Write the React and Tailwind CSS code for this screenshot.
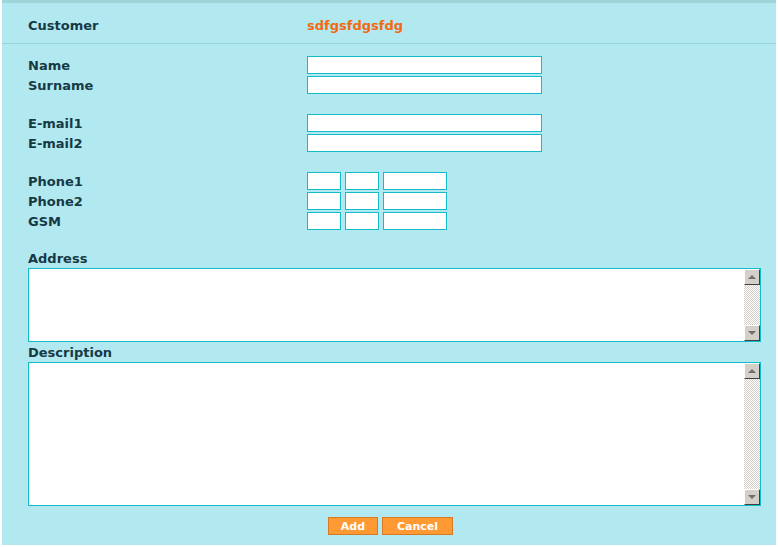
import React from "react";

const font = { fontFamily: '"DejaVu Sans", Verdana, sans-serif' };

const Field = ({ className = "" }) => (
  <input className={`h-[18px] border border-[#14bccb] bg-white outline-none ${className}`} />
);

const ScrollBtn = ({ down }) => (
  <div className="w-[16px] h-[16px] shrink-0 bg-[#d4d0c8] border-t border-l border-t-white border-l-white border-r border-b border-r-[#404040] border-b-[#404040] flex items-center justify-center">
    <svg width="8" height="5" viewBox="0 0 8 5">
      {down ? <path d="M0 0h8L4 4z" fill="#6f6f6f" /> : <path d="M4 0l4 4H0z" fill="#6f6f6f" />}
    </svg>
  </div>
);

const TextBox = ({ h }) => (
  <div className={`flex border border-[#14bccb] bg-white ${h}`}>
    <textarea className="flex-1 resize-none outline-none bg-white" />
    <div className="w-[16px] flex flex-col">
      <ScrollBtn />
      <div className="flex-1 bg-[repeating-conic-gradient(#d4d0c8_0_25%,#ffffff_0_50%)] bg-[length:2px_2px]" />
      <ScrollBtn down />
    </div>
  </div>
);

const Row = ({ label, children }) => (
  <div className="flex items-center h-[20px]">
    <span className="w-[279px] shrink-0 pt-[2px]">{label}</span>
    {children}
  </div>
);

export default function App() {
  return (
    <div className="w-[778px] h-[547px] bg-white px-[2px] pb-[2px]" style={font}>
      <div className="h-full bg-[#b2e9f0] border-t-[3px] border-[#9dd5d8] text-[13px] font-bold text-[#163a45]">
        <div className="flex items-center h-[41px] px-[26px] pt-[6px] border-b border-[#97d3d8]">
          <span className="w-[279px]">Customer</span>
          <span className="text-[#f26a12]">sdfgsfdgsfdg</span>
        </div>

        <div className="px-[26px] pt-[11px]">
          <Row label="Name"><Field className="w-[235px]" /></Row>
          <Row label="Surname"><Field className="w-[235px]" /></Row>

          <div className="h-[18px]" />
          <Row label="E-mail1"><Field className="w-[235px]" /></Row>
          <Row label="E-mail2"><Field className="w-[235px]" /></Row>

          <div className="h-[18px]" />
          {["Phone1", "Phone2", "GSM"].map((p) => (
            <Row key={p} label={p}>
              <div className="flex gap-[4px]">
                <Field className="w-[34px]" />
                <Field className="w-[34px]" />
                <Field className="w-[64px]" />
              </div>
            </Row>
          ))}

          <div className="mt-[19px] leading-[18px]">Address</div>
          <TextBox h="h-[74px] w-[733px]" />

          <div className="mt-[1px] leading-[19px]">Description</div>
          <TextBox h="h-[144px] w-[733px]" />

          <div className="flex gap-[4px] mt-[11px] ml-[300px]">
            <button className="w-[50px] h-[18px] bg-[#ff9933] border border-[#d77a22] text-white text-[11px] font-bold leading-none">Add</button>
            <button className="w-[71px] h-[18px] bg-[#ff9933] border border-[#d77a22] text-white text-[11px] font-bold leading-none">Cancel</button>
          </div>
        </div>
      </div>
    </div>
  );
}
